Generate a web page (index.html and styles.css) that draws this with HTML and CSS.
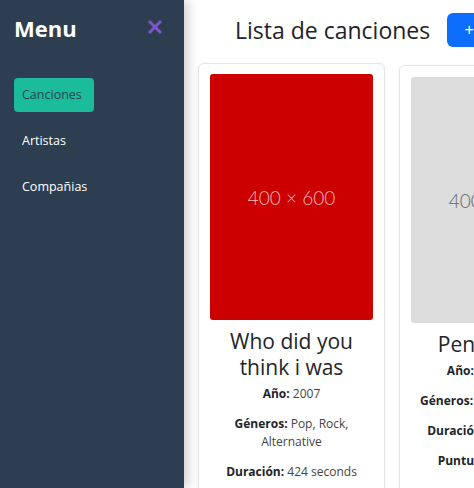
FILE: index.html
```html
<!DOCTYPE html>
<html lang="es">
<head>
<meta charset="utf-8">
<title>Lista de canciones</title>
<link rel="stylesheet" href="styles.css">
</head>
<body>
<div class="layout">
  <aside class="sidebar">
    <div class="sidebar-head">
      <h3 class="brand">Menu</h3>
      <button class="close" aria-label="Cerrar">
        <svg width="16" height="16" viewBox="0 0 16 16"><path d="M2 2 L14 14 M14 2 L2 14" stroke="#7b56c9" stroke-width="3" stroke-linecap="butt"/></svg>
      </button>
    </div>
    <nav class="nav">
      <a class="nav-link active" href="#">Canciones</a>
      <a class="nav-link" href="#">Artistas</a>
      <a class="nav-link" href="#">Compañias</a>
    </nav>
  </aside>
  <main class="main">
    <div class="header">
      <h2 class="title">Lista de canciones</h2>
      <button class="btn-add">+</button>
    </div>
    <div class="cards">
      <div class="card">
        <div class="img red"><span>400 × 600</span></div>
        <div class="card-body">
          <h4 class="card-title">Who did you think i was</h4>
          <p><b>Año:</b> 2007</p>
          <p><b>Géneros:</b> Pop, Rock, Alternative</p>
          <p><b>Duración:</b> 424 seconds</p>
          <p><b>Puntuación:</b> 4</p>
        </div>
      </div>
      <div class="card second">
        <div class="img gray"><span>400 × 600</span></div>
        <div class="card-body">
          <h4 class="card-title">Pennyroyal</h4>
          <p><b>Año:</b> 2010, 2011</p>
          <p><b>Géneros:</b> Pop, Rock, Indie</p>
          <p><b>Duración:</b> 323 seconds</p>
          <p><b>Puntuación:</b> 4.5 / 5</p>
        </div>
      </div>
    </div>
  </main>
</div>
</body>
</html>
```
FILE: styles.css
```css
* { box-sizing: border-box; }
html, body { margin: 0; padding: 0; height: 100%; }
body {
  font-family: "Open Sans", "Noto Sans", sans-serif;
  color: #212529;
  background: #fff;
  overflow: hidden;
}
.layout { display: flex; height: 488px; }
.sidebar {
  width: 184px;
  flex-shrink: 0;
  background: #2c3e50;
  box-shadow: 3px 0 12px rgba(0,0,0,0.22);
  position: relative;
  z-index: 2;
  padding: 0 14px;
}
.sidebar-head {
  display: flex;
  justify-content: space-between;
  align-items: center;
  height: 56px;
}
.brand {
  margin: 0;
  color: #fff;
  font-size: 22px;
  font-weight: 700;
}
.close {
  background: none;
  border: 0;
  padding: 0;
  margin-right: 7px;
  display: flex;
  margin-top: -3px;
}
.nav { display: flex; flex-direction: column; align-items: flex-start; margin-top: 22px; gap: 12px; }
.nav-link {
  color: #fff;
  text-decoration: none;
  font-size: 12.5px;
  line-height: 34px;
  padding: 0 8px;
  border-radius: 4px;
}
.nav-link.active { background: #1abc9c; color: #2c3e50; width: 80px; }
.main {
  flex: 1;
  min-width: 0;
  overflow: hidden;
  padding: 0 0 0 14px;
}
.header {
  display: flex;
  align-items: center;
  gap: 17px;
  padding: 13px 0 0 37px;
  white-space: nowrap;
}
.title {
  margin: 0;
  font-size: 23px;
  font-weight: 500;
  line-height: 34px;
  color: #1f2328;
}
.btn-add {
  background: #0d6efd;
  color: #fff;
  border: 0;
  border-radius: 6px;
  width: 44px;
  height: 34px;
  font-size: 16px;
  flex-shrink: 0;
}
.cards {
  display: flex;
  gap: 14px;
  margin-top: 16px;
}
.card {
  width: 187px;
  flex-shrink: 0;
  border: 1px solid #e6e6e6;
  border-radius: 6px;
  box-shadow: 0 1px 4px rgba(0,0,0,0.06);
  padding: 10px 11px;
  height: 460px;
}
.card.second { margin-top: 2px; padding-top: 11px; }
.img {
  height: 246px;
  border-radius: 3px;
  display: flex;
  align-items: center;
  justify-content: center;
  font-size: 19px;
  font-weight: 300;
  font-family: "Lato", "Open Sans", sans-serif;
}
.img.red { background: #cc0000; color: rgba(255,255,255,0.72); }
.img.gray { background: #dddddd; color: #666; }
.card-body { text-align: center; padding-top: 8px; }
.card-title {
  margin: 0 0 5px;
  font-size: 21px;
  font-weight: 500;
  line-height: 26px;
  color: #212529;
}
.second .card-title { white-space: nowrap; }
.card-body p {
  margin: 0 0 12px;
  font-size: 12px;
  line-height: 18px;
  color: #444;
}
.card-body p b { color: #212529; font-weight: 700; }
.second .card-body p { white-space: nowrap; }
```
